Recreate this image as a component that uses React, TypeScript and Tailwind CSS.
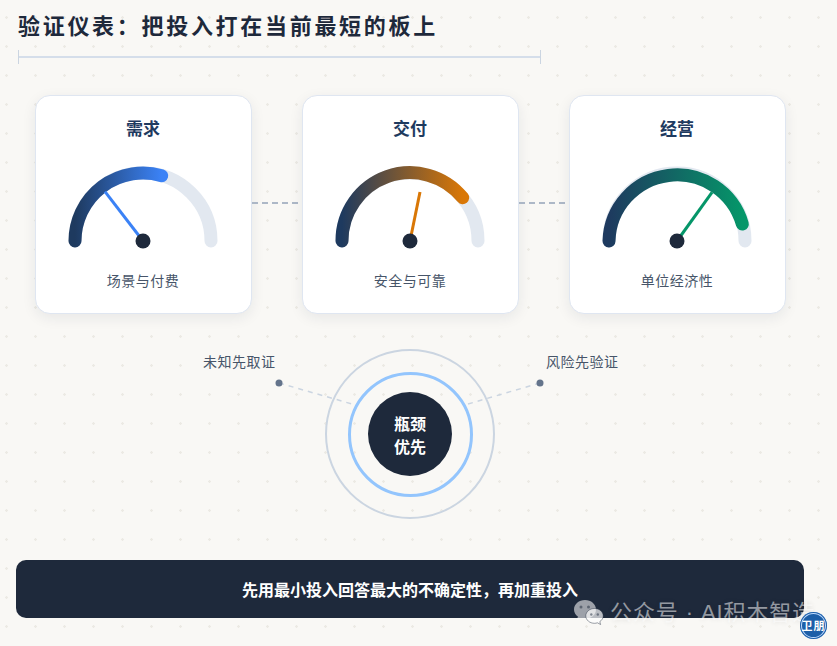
const font = { fontFamily: '"Noto Sans CJK SC", sans-serif' }

type GaugeProps = {
  id: string
  title: string
  caption: string
  color: string
  end: [number, number]
  tip: [number, number]
}

function Gauge({ id, color, end, tip }: GaugeProps) {
  return (
    <svg width="170" height="100" viewBox="0 0 170 100" className="block">
      <defs>
        <linearGradient id={id} gradientUnits="userSpaceOnUse" x1="17" y1="0" x2={end[0]} y2="0">
          <stop offset="0" stopColor="#1e3a5f" />
          <stop offset="1" stopColor={color} />
        </linearGradient>
      </defs>
      <path d="M17 83 A68 68 0 0 1 153 83" fill="none" stroke="#e2e8f0" strokeWidth="13" strokeLinecap="round" />
      <path
        d={`M17 83 A68 68 0 0 1 ${end[0]} ${end[1]}`}
        fill="none"
        stroke={`url(#${id})`}
        strokeWidth="13"
        strokeLinecap="round"
      />
      <line x1="85" y1="83" x2={tip[0]} y2={tip[1]} stroke={color} strokeWidth="3" />
      <circle cx="85" cy="83" r="7.5" fill="#1e293b" />
    </svg>
  )
}

function GaugeCard(props: GaugeProps) {
  return (
    <div className="flex h-[219px] w-[217px] shrink-0 flex-col items-center rounded-[15px] border-[1.5px] border-[#dfe6f1] bg-white pt-[18.5px] pr-[1px] shadow-[0_4px_14px_rgba(30,41,59,0.08)]">
      <h3 className="text-[17px] leading-[25px] font-bold text-[#1e3a5f]">{props.title}</h3>
      <div className="mt-[18px]">
        <Gauge {...props} />
      </div>
      <p className="mt-[12px] text-[14px] leading-[20px] tracking-[0.5px] text-[#475569]">{props.caption}</p>
    </div>
  )
}

function Connector() {
  return (
    <svg width="50" height="2" className="mb-[3px] block shrink-0">
      <line x1="0" y1="1" x2="50" y2="1" stroke="#94a3b8" strokeWidth="1.5" strokeDasharray="6 4" />
    </svg>
  )
}

function WechatMark() {
  return (
    <svg width="32" height="28" viewBox="0 0 32 28" className="block shrink-0">
      <path
        d="M12 1 C5.9 1 1 5.2 1 10.4 C1 13.3 2.5 15.9 4.9 17.6 L3.9 21 L7.8 19 C9.1 19.5 10.5 19.8 12 19.8 C18.1 19.8 23 15.6 23 10.4 C23 5.2 18.1 1 12 1 Z"
        fill="#ffffff90"
      />
      <path
        d="M21.5 9.5 C16.7 9.5 12.8 12.8 12.8 16.9 C12.8 21 16.7 24.3 21.5 24.3 C22.5 24.3 23.5 24.1 24.4 23.8 L27.6 25.5 L26.8 22.6 C28.9 21.3 30.2 19.2 30.2 16.9 C30.2 12.8 26.3 9.5 21.5 9.5 Z"
        fill="#ffffffb0"
        stroke="#1e293b70"
        strokeWidth="1"
      />
      <circle cx="8" cy="8" r="1.5" fill="#1e293b80" />
      <circle cx="15.5" cy="8" r="1.5" fill="#1e293b80" />
      <circle cx="18.3" cy="15.5" r="1.2" fill="#1e293b80" />
      <circle cx="24.8" cy="15.5" r="1.2" fill="#1e293b80" />
    </svg>
  )
}

export default function App() {
  return (
    <div
      style={font}
      className="relative h-[646px] w-[837px] overflow-hidden bg-[#f9f8f5] bg-[radial-gradient(circle,#eceae4_1px,transparent_1.5px)] bg-[size:29px_29px] bg-[position:-8px_3px]"
    >
      <header className="pt-[8px] pl-[18px]">
        <h1 className="text-[22px] leading-[32px] font-bold tracking-[2.7px] text-[#1e293b]">
          验证仪表：把投入打在当前最短的板上
        </h1>
        <div className="mt-[10px] flex h-[14px] w-[523px] items-center border-x border-[#cbd5e1]">
          <div className="h-[2px] w-full bg-[#d5deea]" />
        </div>
      </header>

      <section className="mt-[31px] flex items-center pl-[35px]">
        <GaugeCard
          id="g1"
          title="需求"
          caption="场景与付费"
          color="#3b82f6"
          end={[103.7, 17.7]}
          tip={[47, 33.7]}
        />
        <Connector />
        <GaugeCard
          id="g2"
          title="交付"
          caption="安全与可靠"
          color="#d97706"
          end={[137.7, 39.7]}
          tip={[95, 34]}
        />
        <Connector />
        <GaugeCard
          id="g3"
          title="经营"
          caption="单位经济性"
          color="#059669"
          end={[150.3, 66]}
          tip={[120, 34.3]}
        />
      </section>

      <section className="relative mt-[35px] flex h-[170px] justify-center pr-[17px]">
        <span className="absolute top-[2px] left-[203px] text-[14px] leading-[20px] tracking-[0.5px] text-[#475569]">
          未知先取证
        </span>
        <span className="absolute top-[2px] left-[546px] text-[14px] leading-[20px] tracking-[0.5px] text-[#475569]">
          风险先验证
        </span>
        <svg width="837" height="170" className="absolute top-0 left-0">
          <line x1="279" y1="34" x2="352" y2="55" stroke="#cbd5e1" strokeWidth="1.5" strokeDasharray="5 5" />
          <line x1="540" y1="34" x2="468" y2="55" stroke="#cbd5e1" strokeWidth="1.5" strokeDasharray="5 5" />
          <circle cx="279" cy="34" r="3.5" fill="#64748b" />
          <circle cx="540" cy="34" r="3.5" fill="#64748b" />
        </svg>
        <div className="relative flex h-[170px] w-[170px] items-center justify-center rounded-full border-2 border-[#cbd5e1]">
          <div className="flex h-[125px] w-[125px] items-center justify-center rounded-full border-[3px] border-[#93c5fd]">
            <div className="flex h-[84px] w-[84px] items-center justify-center rounded-full bg-[#1e293b] pt-[1px] text-center text-[16px] leading-[23px] font-bold text-white">
              瓶颈
              <br />
              优先
            </div>
          </div>
        </div>
      </section>

      <footer className="mt-[41px] ml-[16px] flex h-[58px] w-[788px] items-center justify-center rounded-[10px] bg-[#1e293b] text-[16px] font-bold text-white">
        先用最小投入回答最大的不确定性，再加重投入
      </footer>

      <div className="absolute top-[598px] left-[573px] flex items-center gap-[5px]">
        <WechatMark />
        <span className="font-['Liberation_Sans','Noto_Sans_CJK_SC',sans-serif] text-[22px] leading-[30px] tracking-[0.9px] whitespace-pre text-[#ffffff88] [text-shadow:0_0_5px_rgba(0,0,0,0.12)]">
          公众号 · AI积木智造
        </span>
      </div>
      <div className="absolute top-[612px] left-[800px] flex h-[27px] w-[27px] items-center justify-center rounded-full bg-[#1d5fa8] text-[11px] leading-none font-bold tracking-[1px] whitespace-nowrap text-white shadow-[inset_0_0_0_1px_#1d5fa8,inset_0_0_0_2px_#bfdbfe]">
        卫朋
      </div>
    </div>
  )
}
